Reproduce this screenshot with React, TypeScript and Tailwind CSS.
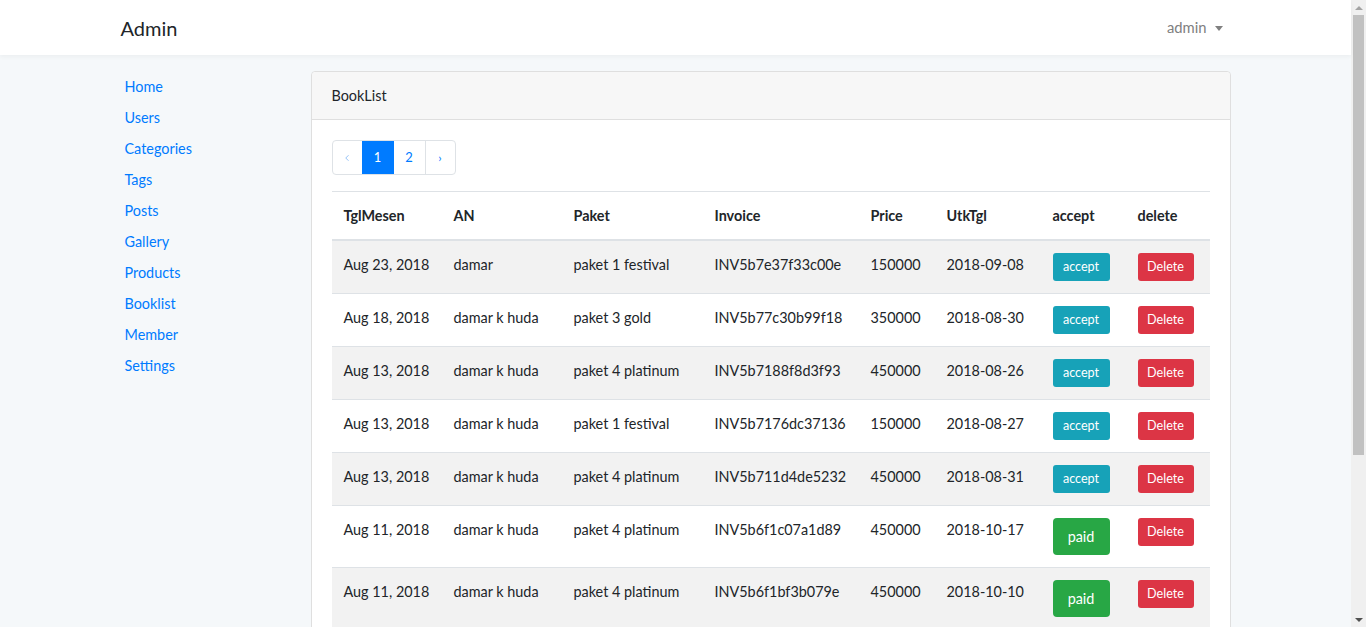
import { ChevronLeft } from "lucide-react";

type Booking = {
  tgl: string;
  an: string;
  paket: string;
  invoice: string;
  price: string;
  utk: string;
  paid: boolean;
};

const menu = ["Home", "Users", "Categories", "Tags", "Posts", "Gallery", "Products", "Booklist", "Member", "Settings"];

const bookings: Booking[] = [
  { tgl: "Aug 23, 2018", an: "damar", paket: "paket 1 festival", invoice: "INV5b7e37f33c00e", price: "150000", utk: "2018-09-08", paid: false },
  { tgl: "Aug 18, 2018", an: "damar k huda", paket: "paket 3 gold", invoice: "INV5b77c30b99f18", price: "350000", utk: "2018-08-30", paid: false },
  { tgl: "Aug 13, 2018", an: "damar k huda", paket: "paket 4 platinum", invoice: "INV5b7188f8d3f93", price: "450000", utk: "2018-08-26", paid: false },
  { tgl: "Aug 13, 2018", an: "damar k huda", paket: "paket 1 festival", invoice: "INV5b7176dc37136", price: "150000", utk: "2018-08-27", paid: false },
  { tgl: "Aug 13, 2018", an: "damar k huda", paket: "paket 4 platinum", invoice: "INV5b711d4de5232", price: "450000", utk: "2018-08-31", paid: false },
  { tgl: "Aug 11, 2018", an: "damar k huda", paket: "paket 4 platinum", invoice: "INV5b6f1c07a1d89", price: "450000", utk: "2018-10-17", paid: true },
  { tgl: "Aug 11, 2018", an: "damar k huda", paket: "paket 4 platinum", invoice: "INV5b6f1bf3b079e", price: "450000", utk: "2018-10-10", paid: true },
];

const cols = [
  { label: "TglMesen", w: "w-[110px]" },
  { label: "AN", w: "w-[120px]" },
  { label: "Paket", w: "w-[141px]" },
  { label: "Invoice", w: "w-[156px]" },
  { label: "Price", w: "w-[76px]" },
  { label: "UtkTgl", w: "w-[106px]" },
  { label: "accept", w: "w-[85px]" },
  { label: "delete", w: "w-[84px]" },
];

function Scrollbar() {
  return (
    <div className="flex w-[15px] shrink-0 flex-col items-center bg-[#f0f0f0]">
      <div className="flex h-[15px] items-center justify-center">
        <div className="h-0 w-0 border-x-[4px] border-b-[4px] border-x-transparent border-b-[#a3a3a3]" />
      </div>
      <div className="h-[440px] w-[11px] bg-[#c1c1c1]" />
      <div className="flex-1" />
      <div className="flex h-[15px] items-center justify-center">
        <div className="h-0 w-0 border-x-[4px] border-t-[4px] border-x-transparent border-t-[#505050]" />
      </div>
    </div>
  );
}

export default function App() {
  return (
    <div
      className="flex h-[627px] overflow-hidden text-[14.4px] leading-[23px] text-[#212529]"
      style={{ fontFamily: "Lato, 'Open Sans', sans-serif" }}
    >
      <div className="flex min-w-0 flex-1 flex-col bg-[#f5f8fa]">
        {/* Navbar */}
        <nav className="relative z-10 h-[55px] shrink-0 bg-white shadow-[0_2px_4px_rgba(0,0,0,0.04)]">
          <div className="mx-auto flex h-full w-[1140px] items-center justify-between px-[15px]">
            <span className="text-[20px] leading-none">Admin</span>
            <button className="mr-[8px] flex items-center gap-[8px] text-[14.8px] text-[#808080]">
              admin
              <span className="mt-[2px] h-0 w-0 border-x-[4px] border-t-[5px] border-x-transparent border-t-[#808080]" />
            </button>
          </div>
        </nav>

        <div className="mx-auto flex w-[1140px] pt-[16px]">
          {/* Sidebar */}
          <ul className="w-[190px] shrink-0 pl-[19px]">
            {menu.map((m) => (
              <li key={m} className="py-[4px] text-[#007bff]">
                {m}
              </li>
            ))}
          </ul>

          {/* Card */}
          <div className="mx-[15px] min-w-0 flex-1 rounded-[4px] border border-[#dfdfdf] bg-white">
            <div className="rounded-t-[4px] border-b border-[#dfdfdf] bg-[#f7f7f7] px-[20px] py-[12px]">BookList</div>
            <div className="p-[20px]">
              <div className="mb-[16px] flex h-[35px] w-fit overflow-hidden rounded-[4px] border border-[#dee2e6] text-[#007bff]">
                <span className="flex w-[29px] items-center justify-center text-[#7fb6f5]">
                  <ChevronLeft className="h-[10px] w-[10px]" strokeWidth={2} />
                </span>
                <span className="flex w-[32px] items-center justify-center bg-[#007bff] text-[13px] text-white">1</span>
                <span className="flex w-[32px] items-center justify-center border-r border-[#dee2e6] text-[13px]">2</span>
                <span className="flex w-[29px] items-center justify-center text-[12px]">›</span>
              </div>

              <table className="w-full table-fixed border-collapse text-left">
                <thead>
                  <tr className="border-t border-[#dee2e6]">
                    {cols.map((c) => (
                      <th key={c.label} className={`${c.w} border-b-2 border-[#dee2e6] p-[12px] font-bold`}>
                        {c.label}
                      </th>
                    ))}
                  </tr>
                </thead>
                <tbody>
                  {bookings.map((b, i) => (
                    <tr key={b.invoice} className={`border-t border-[#dee2e6] align-top ${i % 2 === 0 ? "bg-[#f2f2f2]" : "bg-white"}`}>
                      <td className="p-[12px] whitespace-nowrap">{b.tgl}</td>
                      <td className="p-[12px] whitespace-nowrap">{b.an}</td>
                      <td className="p-[12px] whitespace-nowrap">{b.paket}</td>
                      <td className="p-[12px] whitespace-nowrap">{b.invoice}</td>
                      <td className="p-[12px]">{b.price}</td>
                      <td className="p-[12px]">{b.utk}</td>
                      <td className="p-[12px]">
                        {b.paid ? (
                          <button className="h-[37px] w-[57px] rounded-[4px] bg-[#28a745] text-[14.4px] text-white">paid</button>
                        ) : (
                          <button className="h-[28px] w-[57px] rounded-[3px] bg-[#17a2b8] text-[12.6px] leading-none text-white">accept</button>
                        )}
                      </td>
                      <td className="p-[12px]">
                        <button className="h-[28px] w-[56px] rounded-[3px] bg-[#dc3545] text-[12.6px] leading-none text-white">Delete</button>
                      </td>
                    </tr>
                  ))}
                </tbody>
              </table>
            </div>
          </div>
        </div>
      </div>
      <Scrollbar />
    </div>
  );
}
